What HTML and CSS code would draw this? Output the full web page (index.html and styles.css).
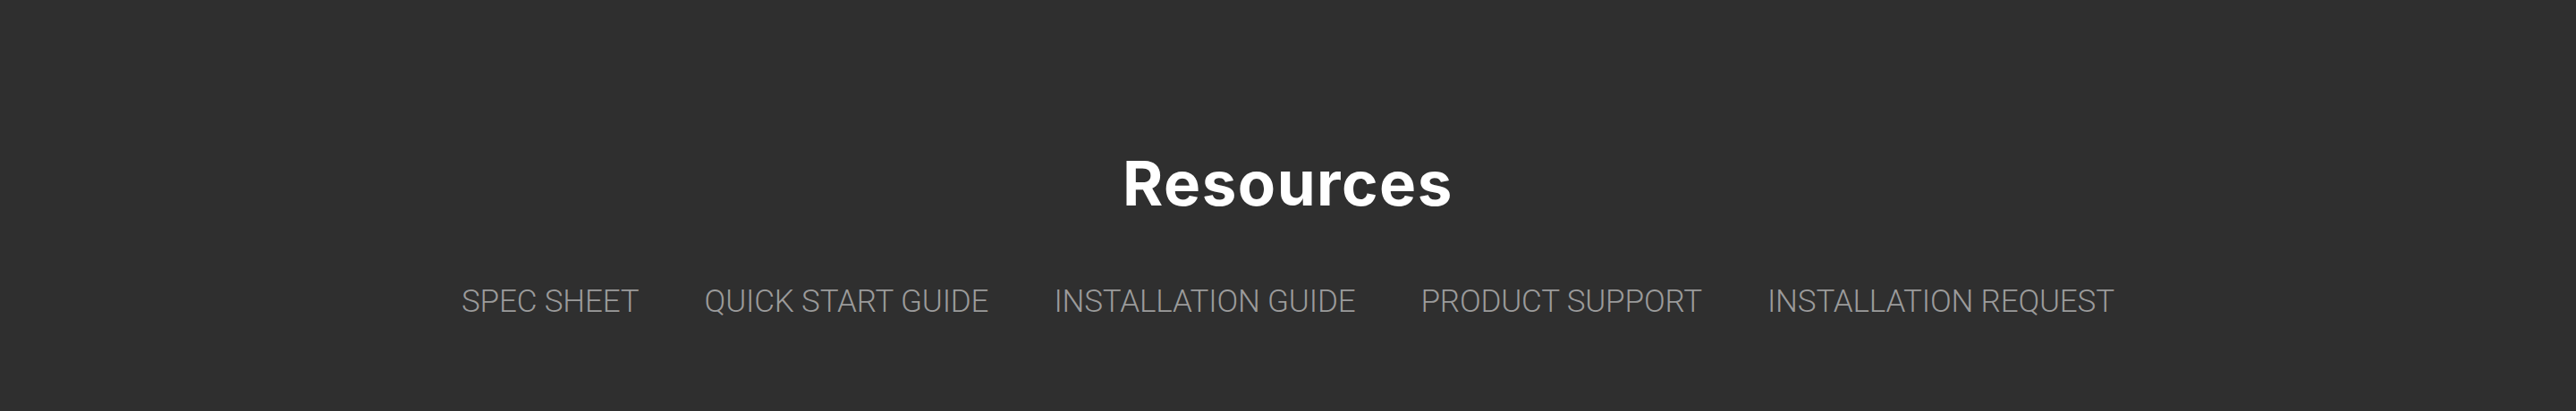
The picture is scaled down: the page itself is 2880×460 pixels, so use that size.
FILE: index.html
```html
<!DOCTYPE html>
<html lang="en">
<head>
<meta charset="utf-8">
<title>Resources</title>
<link rel="stylesheet" href="styles.css">
</head>
<body>
<section class="resources">
  <h2 class="resources__title">Resources</h2>
  <nav class="resources__links">
    <a class="resources__link" href="#">SPEC SHEET</a>
    <a class="resources__link" href="#">QUICK START GUIDE</a>
    <a class="resources__link" href="#">INSTALLATION GUIDE</a>
    <a class="resources__link" href="#">PRODUCT SUPPORT</a>
    <a class="resources__link" href="#">INSTALLATION REQUEST</a>
  </nav>
</section>
</body>
</html>
```
FILE: styles.css
```css
html, body {
  margin: 0;
  padding: 0;
}
body {
  background: #2f2f2f;
  width: 2880px;
  height: 460px;
  overflow: hidden;
}
.resources {
  display: flex;
  flex-direction: column;
  align-items: center;
  padding-top: 171px;
}
.resources__title {
  margin: 0;
  font-family: Inter, "Noto Sans", sans-serif;
  font-weight: 700;
  font-size: 69px;
  line-height: 69px;
  color: #ffffff;
  letter-spacing: 1.5px;
}
.resources__links {
  display: flex;
  gap: 73px;
  margin-top: 80px;
}
.resources__link {
  font-family: Roboto, "Liberation Sans", sans-serif;
  font-weight: 300;
  font-size: 35px;
  line-height: 35px;
  color: #9b9b9b;
  text-decoration: none;
  letter-spacing: -0.15px;
}
```
